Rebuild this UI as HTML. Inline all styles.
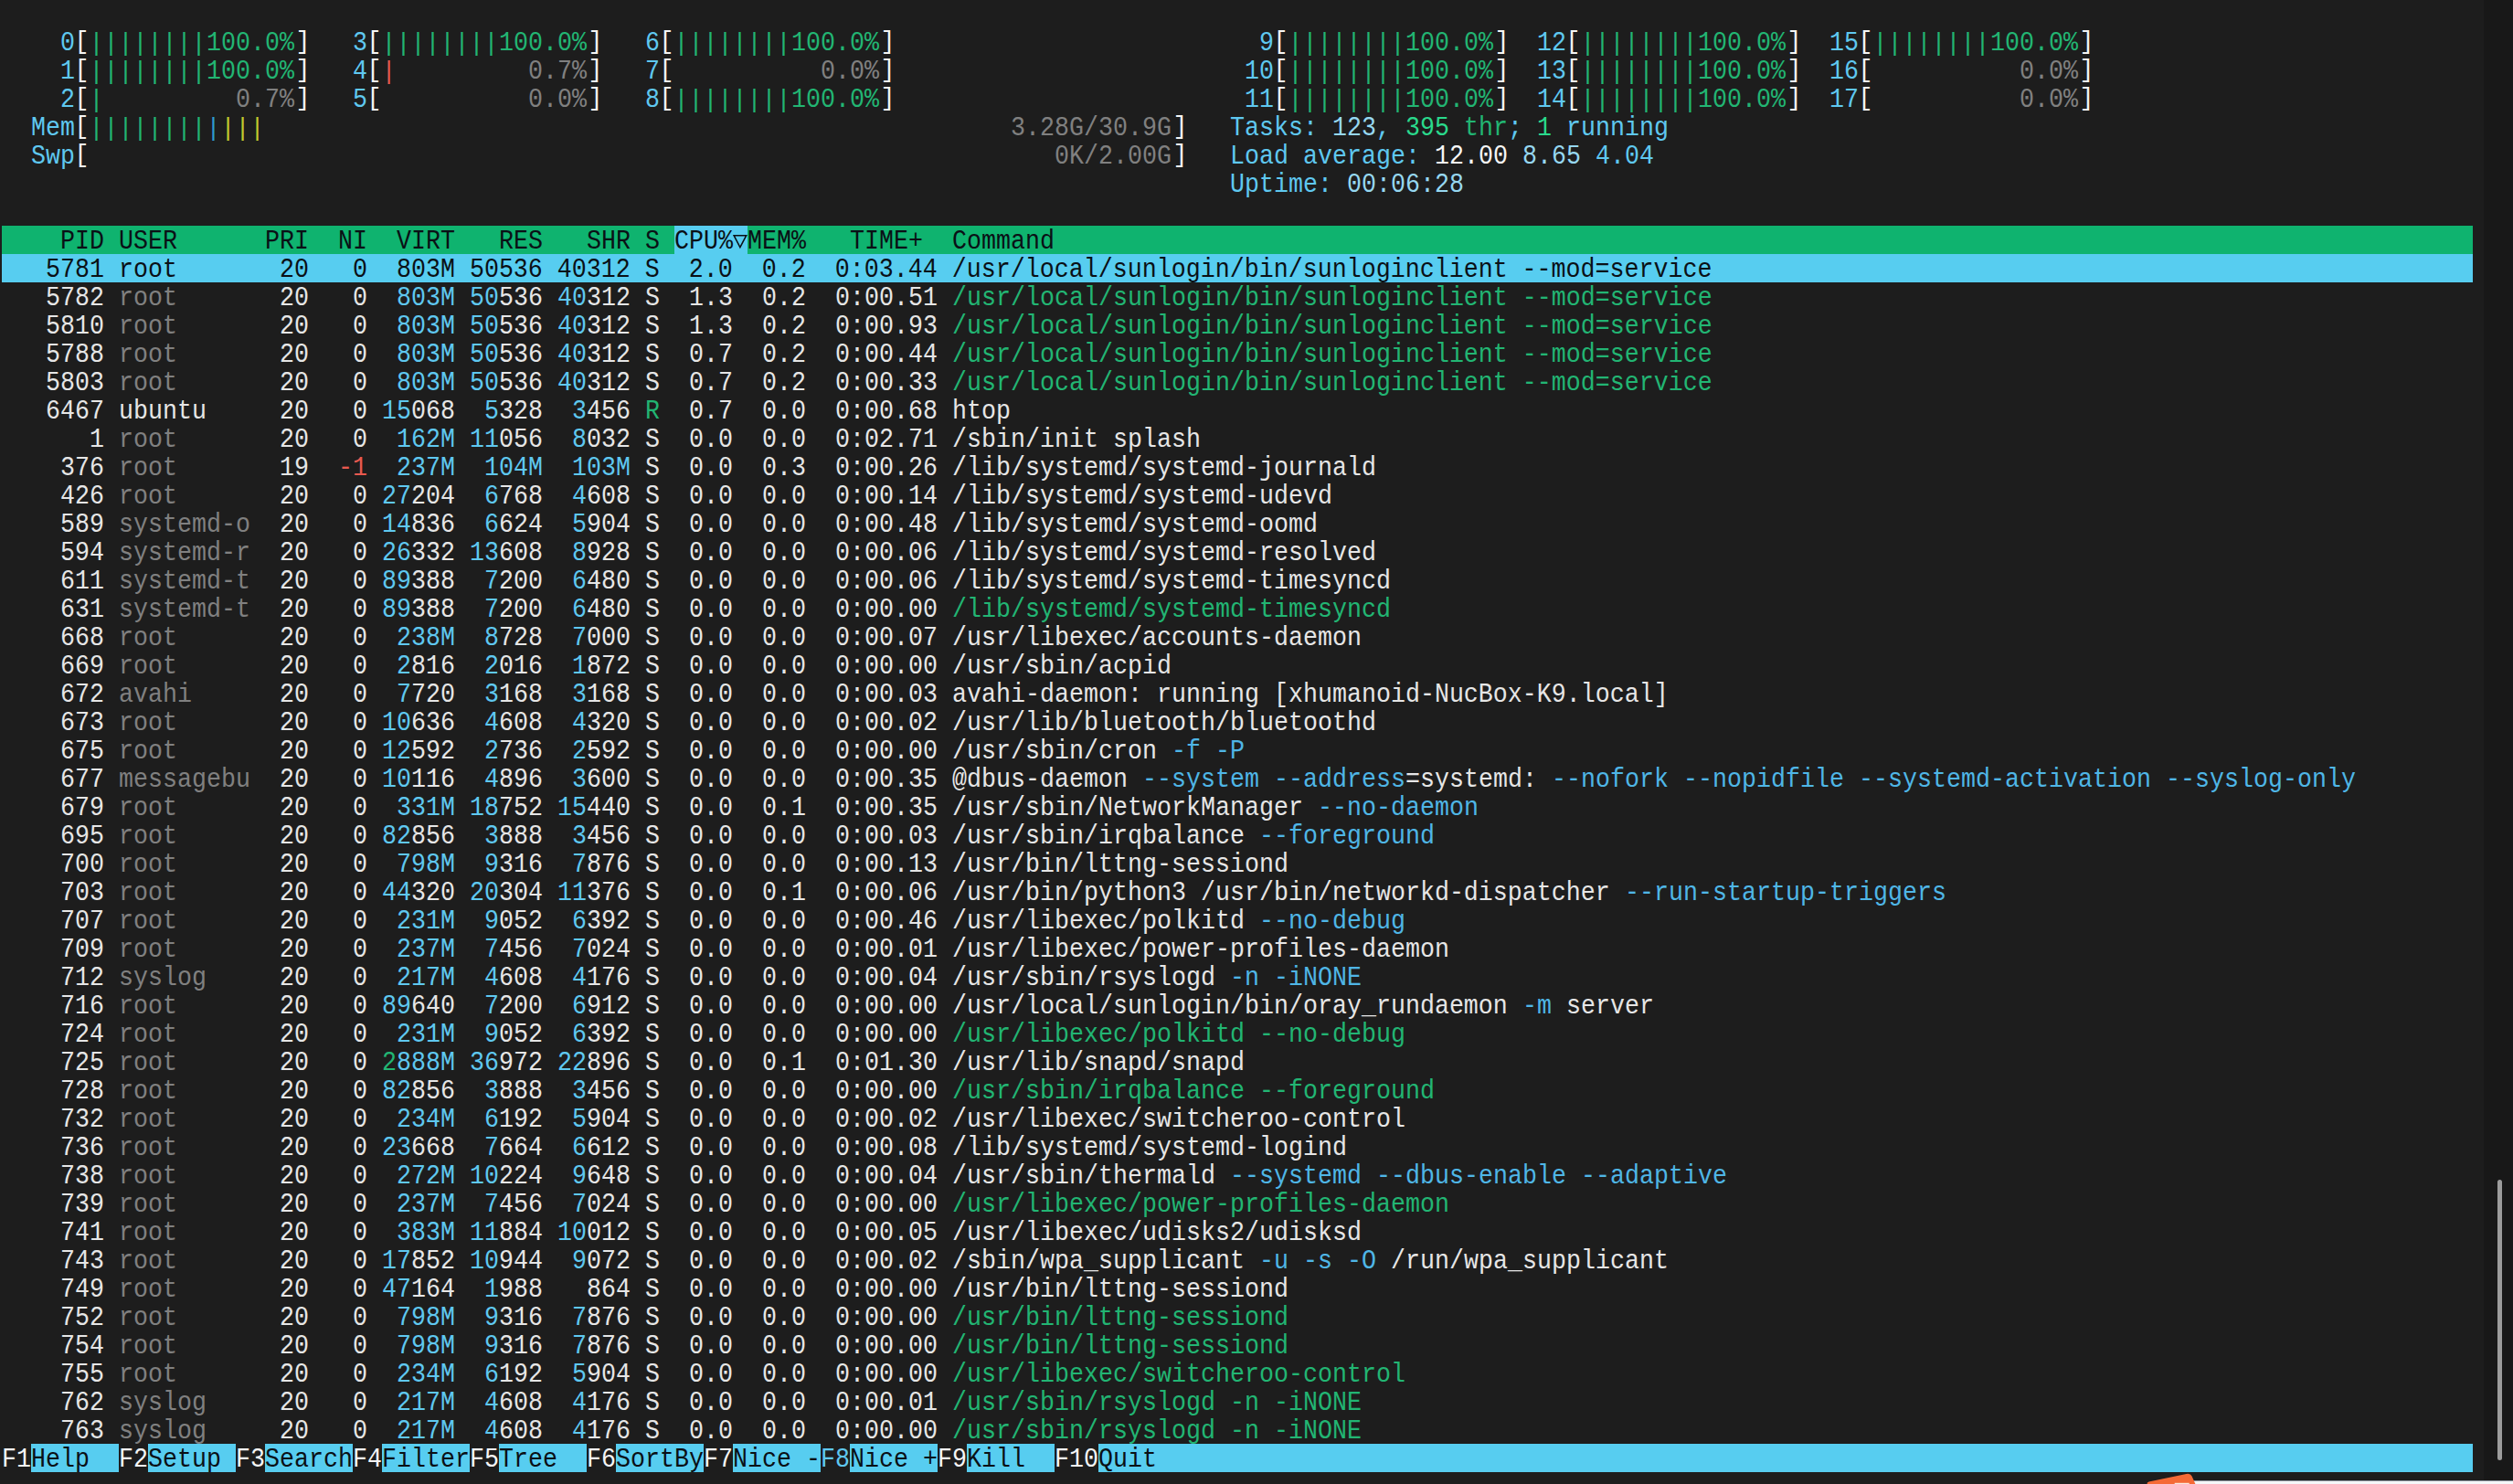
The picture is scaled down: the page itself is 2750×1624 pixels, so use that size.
<!DOCTYPE html>
<html><head><meta charset="utf-8"><title>htop</title>
<style>
html,body{margin:0;padding:0;background:#1d1d1d;}
body{width:2750px;height:1624px;overflow:hidden;position:relative;font-family:"Liberation Mono",monospace;}
#bg,#tx{position:absolute;left:0;top:0;width:2750px;height:1624px;overflow:hidden;}
#bg div{position:absolute;}
.r{position:absolute;left:0;height:31px;line-height:31px;width:2750px;font-size:26.6623px;white-space:pre;font-kerning:none;font-variant-ligatures:none;}
.r span{position:absolute;top:0;height:31px;transform:scaleY(1.09);transform-origin:0 22.6px;}
.r span.bl{transform:translate(-0.6px,-1.7px) scaleY(1.04);}
.r span.br{transform:translate(1.4px,-1.7px) scaleY(1.04);}
.r span.ba{transform:translate(-0.5px,0.4px) scaleY(1.03);}
.w{color:#e6e6e6}.W{color:#f5f5f5}.g{color:#808080}.c{color:#5fc8f0}.C{color:#96d7f0}.f{color:#4fb6e6}
.n{color:#22b573}.N{color:#2ad98c}.r0{color:#e8594f}.y{color:#c2ca2e}.b{color:#2f9bd0}.k{color:#0a1016}
</style></head><body>
<div id="bg">
<div style="left:2px;top:247px;width:2704px;height:31px;background:#0fb36f;"></div>
<div style="left:738px;top:247px;width:80px;height:31px;background:#57cdf0;"></div>
<div style="left:2px;top:278px;width:2704px;height:31px;background:#57cdf0;"></div>
<div style="left:34px;top:1580px;width:96px;height:31px;background:#57cdf0;"></div>
<div style="left:162px;top:1580px;width:96px;height:31px;background:#57cdf0;"></div>
<div style="left:290px;top:1580px;width:96px;height:31px;background:#57cdf0;"></div>
<div style="left:418px;top:1580px;width:96px;height:31px;background:#57cdf0;"></div>
<div style="left:546px;top:1580px;width:96px;height:31px;background:#57cdf0;"></div>
<div style="left:674px;top:1580px;width:96px;height:31px;background:#57cdf0;"></div>
<div style="left:802px;top:1580px;width:96px;height:31px;background:#57cdf0;"></div>
<div style="left:930px;top:1580px;width:96px;height:31px;background:#57cdf0;"></div>
<div style="left:1058px;top:1580px;width:96px;height:31px;background:#57cdf0;"></div>
<div style="left:1202px;top:1580px;width:1504px;height:31px;background:#57cdf0;"></div>
<div style="left:2718px;top:0px;width:32px;height:1620px;background:#181818;"></div>
<div style="left:2733px;top:1291px;width:5px;height:307px;background:#9c9c9c;border-radius:2.5px;"></div>
<div style="left:2400px;top:1621px;width:350px;height:3px;background:#f5f7f9;"></div>
<div style="left:2400px;top:1620px;width:350px;height:1px;background:#868e98;"></div>
<svg style="position:absolute;left:2340px;top:1608px" width="70" height="16" viewBox="0 0 70 16"><path d="M9.6 16 Q9.2 14.2 11.5 13.6 L52.5 5.0 Q57 4.0 58.6 7.6 L62.4 16 Z" fill="#f56a36"/><rect x="39.7" y="14.8" width="16" height="1.2" fill="#fbe9dc"/></svg>
</div>
<div id="tx">
<div class="r" style="top:33.35px"><span class="c" style="left:34px">  0</span><span class="W bl" style="left:82px">[</span><span class="n ba" style="left:98px">||||||||</span><span class="n" style="left:226px">100.0%</span><span class="W br" style="left:322px">]</span><span class="c" style="left:354px">  3</span><span class="W bl" style="left:402px">[</span><span class="n ba" style="left:418px">||||||||</span><span class="n" style="left:546px">100.0%</span><span class="W br" style="left:642px">]</span><span class="c" style="left:674px">  6</span><span class="W bl" style="left:722px">[</span><span class="n ba" style="left:738px">||||||||</span><span class="n" style="left:866px">100.0%</span><span class="W br" style="left:962px">]</span><span class="c" style="left:1346px">  9</span><span class="W bl" style="left:1394px">[</span><span class="n ba" style="left:1410px">||||||||</span><span class="n" style="left:1538px">100.0%</span><span class="W br" style="left:1634px">]</span><span class="c" style="left:1666px"> 12</span><span class="W bl" style="left:1714px">[</span><span class="n ba" style="left:1730px">||||||||</span><span class="n" style="left:1858px">100.0%</span><span class="W br" style="left:1954px">]</span><span class="c" style="left:1986px"> 15</span><span class="W bl" style="left:2034px">[</span><span class="n ba" style="left:2050px">||||||||</span><span class="n" style="left:2178px">100.0%</span><span class="W br" style="left:2274px">]</span></div>
<div class="r" style="top:64.35px"><span class="c" style="left:34px">  1</span><span class="W bl" style="left:82px">[</span><span class="n ba" style="left:98px">||||||||</span><span class="n" style="left:226px">100.0%</span><span class="W br" style="left:322px">]</span><span class="c" style="left:354px">  4</span><span class="W bl" style="left:402px">[</span><span class="r0 ba" style="left:418px">|</span><span class="g" style="left:578px">0.7%</span><span class="W br" style="left:642px">]</span><span class="c" style="left:674px">  7</span><span class="W bl" style="left:722px">[</span><span class="g" style="left:898px">0.0%</span><span class="W br" style="left:962px">]</span><span class="c" style="left:1346px"> 10</span><span class="W bl" style="left:1394px">[</span><span class="n ba" style="left:1410px">||||||||</span><span class="n" style="left:1538px">100.0%</span><span class="W br" style="left:1634px">]</span><span class="c" style="left:1666px"> 13</span><span class="W bl" style="left:1714px">[</span><span class="n ba" style="left:1730px">||||||||</span><span class="n" style="left:1858px">100.0%</span><span class="W br" style="left:1954px">]</span><span class="c" style="left:1986px"> 16</span><span class="W bl" style="left:2034px">[</span><span class="g" style="left:2210px">0.0%</span><span class="W br" style="left:2274px">]</span></div>
<div class="r" style="top:95.35px"><span class="c" style="left:34px">  2</span><span class="W bl" style="left:82px">[</span><span class="n ba" style="left:98px">|</span><span class="g" style="left:258px">0.7%</span><span class="W br" style="left:322px">]</span><span class="c" style="left:354px">  5</span><span class="W bl" style="left:402px">[</span><span class="g" style="left:578px">0.0%</span><span class="W br" style="left:642px">]</span><span class="c" style="left:674px">  8</span><span class="W bl" style="left:722px">[</span><span class="n ba" style="left:738px">||||||||</span><span class="n" style="left:866px">100.0%</span><span class="W br" style="left:962px">]</span><span class="c" style="left:1346px"> 11</span><span class="W bl" style="left:1394px">[</span><span class="n ba" style="left:1410px">||||||||</span><span class="n" style="left:1538px">100.0%</span><span class="W br" style="left:1634px">]</span><span class="c" style="left:1666px"> 14</span><span class="W bl" style="left:1714px">[</span><span class="n ba" style="left:1730px">||||||||</span><span class="n" style="left:1858px">100.0%</span><span class="W br" style="left:1954px">]</span><span class="c" style="left:1986px"> 17</span><span class="W bl" style="left:2034px">[</span><span class="g" style="left:2210px">0.0%</span><span class="W br" style="left:2274px">]</span></div>
<div class="r" style="top:126.35px"><span class="c" style="left:34px">Mem</span><span class="W bl" style="left:82px">[</span><span class="n ba" style="left:98px">||||||||</span><span class="b ba" style="left:226px">|</span><span class="y ba" style="left:242px">|||</span><span class="g" style="left:1106px">3.28G/30.9G</span><span class="W br" style="left:1282px">]</span><span class="c" style="left:1346px">Tasks: </span><span class="C" style="left:1458px">123</span><span class="c" style="left:1506px">, </span><span class="N" style="left:1538px">395</span><span class="n" style="left:1586px"> thr</span><span class="c" style="left:1650px">; </span><span class="N" style="left:1682px">1</span><span class="c" style="left:1698px"> running</span></div>
<div class="r" style="top:157.35px"><span class="c" style="left:34px">Swp</span><span class="W bl" style="left:82px">[</span><span class="g" style="left:1154px">0K/2.00G</span><span class="W br" style="left:1282px">]</span><span class="c" style="left:1346px">Load average: </span><span class="W" style="left:1570px">12.00 </span><span class="C" style="left:1666px">8.65 </span><span class="c" style="left:1746px">4.04</span></div>
<div class="r" style="top:188.35px"><span class="c" style="left:1346px">Uptime: </span><span class="C" style="left:1474px">00:06:28</span></div>
<div class="r" style="top:250.35px"><span class="k" style="left:66px">PID</span><span class="k" style="left:130px">USER</span><span class="k" style="left:290px">PRI</span><span class="k" style="left:370px">NI</span><span class="k" style="left:434px">VIRT</span><span class="k" style="left:546px">RES</span><span class="k" style="left:642px">SHR</span><span class="k" style="left:706px">S</span><span class="k" style="left:738px">CPU%</span><span class="k" style="left:818px">MEM%</span><span class="k" style="left:930px">TIME+</span><span class="k" style="left:1042px">Command</span></div>
<div class="r" style="top:281.35px"><span class="k" style="left:2px">   5781 root       20   0  803M 50536 40312 S  2.0  0.2  0:03.44 /usr/local/sunlogin/bin/sunloginclient --mod=service</span></div>
<div class="r" style="top:312.35px"><span class="w" style="left:2px">   5782</span><span class="g" style="left:130px">root</span><span class="w" style="left:290px"> 20</span><span class="w" style="left:354px">  0</span><span class="c" style="left:434px">803M</span><span class="c" style="left:514px">50</span><span class="w" style="left:546px">536</span><span class="c" style="left:610px">40</span><span class="w" style="left:642px">312</span><span class="w" style="left:706px">S</span><span class="w" style="left:738px"> 1.3</span><span class="w" style="left:818px"> 0.2</span><span class="w" style="left:898px"> 0:00.51</span><span class="n" style="left:1042px">/usr/local/sunlogin/bin/sunloginclient --mod=service</span></div>
<div class="r" style="top:343.35px"><span class="w" style="left:2px">   5810</span><span class="g" style="left:130px">root</span><span class="w" style="left:290px"> 20</span><span class="w" style="left:354px">  0</span><span class="c" style="left:434px">803M</span><span class="c" style="left:514px">50</span><span class="w" style="left:546px">536</span><span class="c" style="left:610px">40</span><span class="w" style="left:642px">312</span><span class="w" style="left:706px">S</span><span class="w" style="left:738px"> 1.3</span><span class="w" style="left:818px"> 0.2</span><span class="w" style="left:898px"> 0:00.93</span><span class="n" style="left:1042px">/usr/local/sunlogin/bin/sunloginclient --mod=service</span></div>
<div class="r" style="top:374.35px"><span class="w" style="left:2px">   5788</span><span class="g" style="left:130px">root</span><span class="w" style="left:290px"> 20</span><span class="w" style="left:354px">  0</span><span class="c" style="left:434px">803M</span><span class="c" style="left:514px">50</span><span class="w" style="left:546px">536</span><span class="c" style="left:610px">40</span><span class="w" style="left:642px">312</span><span class="w" style="left:706px">S</span><span class="w" style="left:738px"> 0.7</span><span class="w" style="left:818px"> 0.2</span><span class="w" style="left:898px"> 0:00.44</span><span class="n" style="left:1042px">/usr/local/sunlogin/bin/sunloginclient --mod=service</span></div>
<div class="r" style="top:405.35px"><span class="w" style="left:2px">   5803</span><span class="g" style="left:130px">root</span><span class="w" style="left:290px"> 20</span><span class="w" style="left:354px">  0</span><span class="c" style="left:434px">803M</span><span class="c" style="left:514px">50</span><span class="w" style="left:546px">536</span><span class="c" style="left:610px">40</span><span class="w" style="left:642px">312</span><span class="w" style="left:706px">S</span><span class="w" style="left:738px"> 0.7</span><span class="w" style="left:818px"> 0.2</span><span class="w" style="left:898px"> 0:00.33</span><span class="n" style="left:1042px">/usr/local/sunlogin/bin/sunloginclient --mod=service</span></div>
<div class="r" style="top:436.35px"><span class="w" style="left:2px">   6467</span><span class="w" style="left:130px">ubuntu</span><span class="w" style="left:290px"> 20</span><span class="w" style="left:354px">  0</span><span class="c" style="left:418px">15</span><span class="w" style="left:450px">068</span><span class="c" style="left:530px">5</span><span class="w" style="left:546px">328</span><span class="c" style="left:626px">3</span><span class="w" style="left:642px">456</span><span class="n" style="left:706px">R</span><span class="w" style="left:738px"> 0.7</span><span class="w" style="left:818px"> 0.0</span><span class="w" style="left:898px"> 0:00.68</span><span class="w" style="left:1042px">htop</span></div>
<div class="r" style="top:467.35px"><span class="w" style="left:2px">      1</span><span class="g" style="left:130px">root</span><span class="w" style="left:290px"> 20</span><span class="w" style="left:354px">  0</span><span class="c" style="left:434px">162M</span><span class="c" style="left:514px">11</span><span class="w" style="left:546px">056</span><span class="c" style="left:626px">8</span><span class="w" style="left:642px">032</span><span class="w" style="left:706px">S</span><span class="w" style="left:738px"> 0.0</span><span class="w" style="left:818px"> 0.0</span><span class="w" style="left:898px"> 0:02.71</span><span class="w" style="left:1042px">/sbin/init splash</span></div>
<div class="r" style="top:498.35px"><span class="w" style="left:2px">    376</span><span class="g" style="left:130px">root</span><span class="w" style="left:290px"> 19</span><span class="r0" style="left:354px"> -1</span><span class="c" style="left:434px">237M</span><span class="c" style="left:530px">104M</span><span class="c" style="left:626px">103M</span><span class="w" style="left:706px">S</span><span class="w" style="left:738px"> 0.0</span><span class="w" style="left:818px"> 0.3</span><span class="w" style="left:898px"> 0:00.26</span><span class="w" style="left:1042px">/lib/systemd/systemd-journald</span></div>
<div class="r" style="top:529.35px"><span class="w" style="left:2px">    426</span><span class="g" style="left:130px">root</span><span class="w" style="left:290px"> 20</span><span class="w" style="left:354px">  0</span><span class="c" style="left:418px">27</span><span class="w" style="left:450px">204</span><span class="c" style="left:530px">6</span><span class="w" style="left:546px">768</span><span class="c" style="left:626px">4</span><span class="w" style="left:642px">608</span><span class="w" style="left:706px">S</span><span class="w" style="left:738px"> 0.0</span><span class="w" style="left:818px"> 0.0</span><span class="w" style="left:898px"> 0:00.14</span><span class="w" style="left:1042px">/lib/systemd/systemd-udevd</span></div>
<div class="r" style="top:560.35px"><span class="w" style="left:2px">    589</span><span class="g" style="left:130px">systemd-o</span><span class="w" style="left:290px"> 20</span><span class="w" style="left:354px">  0</span><span class="c" style="left:418px">14</span><span class="w" style="left:450px">836</span><span class="c" style="left:530px">6</span><span class="w" style="left:546px">624</span><span class="c" style="left:626px">5</span><span class="w" style="left:642px">904</span><span class="w" style="left:706px">S</span><span class="w" style="left:738px"> 0.0</span><span class="w" style="left:818px"> 0.0</span><span class="w" style="left:898px"> 0:00.48</span><span class="w" style="left:1042px">/lib/systemd/systemd-oomd</span></div>
<div class="r" style="top:591.35px"><span class="w" style="left:2px">    594</span><span class="g" style="left:130px">systemd-r</span><span class="w" style="left:290px"> 20</span><span class="w" style="left:354px">  0</span><span class="c" style="left:418px">26</span><span class="w" style="left:450px">332</span><span class="c" style="left:514px">13</span><span class="w" style="left:546px">608</span><span class="c" style="left:626px">8</span><span class="w" style="left:642px">928</span><span class="w" style="left:706px">S</span><span class="w" style="left:738px"> 0.0</span><span class="w" style="left:818px"> 0.0</span><span class="w" style="left:898px"> 0:00.06</span><span class="w" style="left:1042px">/lib/systemd/systemd-resolved</span></div>
<div class="r" style="top:622.35px"><span class="w" style="left:2px">    611</span><span class="g" style="left:130px">systemd-t</span><span class="w" style="left:290px"> 20</span><span class="w" style="left:354px">  0</span><span class="c" style="left:418px">89</span><span class="w" style="left:450px">388</span><span class="c" style="left:530px">7</span><span class="w" style="left:546px">200</span><span class="c" style="left:626px">6</span><span class="w" style="left:642px">480</span><span class="w" style="left:706px">S</span><span class="w" style="left:738px"> 0.0</span><span class="w" style="left:818px"> 0.0</span><span class="w" style="left:898px"> 0:00.06</span><span class="w" style="left:1042px">/lib/systemd/systemd-timesyncd</span></div>
<div class="r" style="top:653.35px"><span class="w" style="left:2px">    631</span><span class="g" style="left:130px">systemd-t</span><span class="w" style="left:290px"> 20</span><span class="w" style="left:354px">  0</span><span class="c" style="left:418px">89</span><span class="w" style="left:450px">388</span><span class="c" style="left:530px">7</span><span class="w" style="left:546px">200</span><span class="c" style="left:626px">6</span><span class="w" style="left:642px">480</span><span class="w" style="left:706px">S</span><span class="w" style="left:738px"> 0.0</span><span class="w" style="left:818px"> 0.0</span><span class="w" style="left:898px"> 0:00.00</span><span class="n" style="left:1042px">/lib/systemd/systemd-timesyncd</span></div>
<div class="r" style="top:684.35px"><span class="w" style="left:2px">    668</span><span class="g" style="left:130px">root</span><span class="w" style="left:290px"> 20</span><span class="w" style="left:354px">  0</span><span class="c" style="left:434px">238M</span><span class="c" style="left:530px">8</span><span class="w" style="left:546px">728</span><span class="c" style="left:626px">7</span><span class="w" style="left:642px">000</span><span class="w" style="left:706px">S</span><span class="w" style="left:738px"> 0.0</span><span class="w" style="left:818px"> 0.0</span><span class="w" style="left:898px"> 0:00.07</span><span class="w" style="left:1042px">/usr/libexec/accounts-daemon</span></div>
<div class="r" style="top:715.35px"><span class="w" style="left:2px">    669</span><span class="g" style="left:130px">root</span><span class="w" style="left:290px"> 20</span><span class="w" style="left:354px">  0</span><span class="c" style="left:434px">2</span><span class="w" style="left:450px">816</span><span class="c" style="left:530px">2</span><span class="w" style="left:546px">016</span><span class="c" style="left:626px">1</span><span class="w" style="left:642px">872</span><span class="w" style="left:706px">S</span><span class="w" style="left:738px"> 0.0</span><span class="w" style="left:818px"> 0.0</span><span class="w" style="left:898px"> 0:00.00</span><span class="w" style="left:1042px">/usr/sbin/acpid</span></div>
<div class="r" style="top:746.35px"><span class="w" style="left:2px">    672</span><span class="g" style="left:130px">avahi</span><span class="w" style="left:290px"> 20</span><span class="w" style="left:354px">  0</span><span class="c" style="left:434px">7</span><span class="w" style="left:450px">720</span><span class="c" style="left:530px">3</span><span class="w" style="left:546px">168</span><span class="c" style="left:626px">3</span><span class="w" style="left:642px">168</span><span class="w" style="left:706px">S</span><span class="w" style="left:738px"> 0.0</span><span class="w" style="left:818px"> 0.0</span><span class="w" style="left:898px"> 0:00.03</span><span class="w" style="left:1042px">avahi-daemon: running [xhumanoid-NucBox-K9.local]</span></div>
<div class="r" style="top:777.35px"><span class="w" style="left:2px">    673</span><span class="g" style="left:130px">root</span><span class="w" style="left:290px"> 20</span><span class="w" style="left:354px">  0</span><span class="c" style="left:418px">10</span><span class="w" style="left:450px">636</span><span class="c" style="left:530px">4</span><span class="w" style="left:546px">608</span><span class="c" style="left:626px">4</span><span class="w" style="left:642px">320</span><span class="w" style="left:706px">S</span><span class="w" style="left:738px"> 0.0</span><span class="w" style="left:818px"> 0.0</span><span class="w" style="left:898px"> 0:00.02</span><span class="w" style="left:1042px">/usr/lib/bluetooth/bluetoothd</span></div>
<div class="r" style="top:808.35px"><span class="w" style="left:2px">    675</span><span class="g" style="left:130px">root</span><span class="w" style="left:290px"> 20</span><span class="w" style="left:354px">  0</span><span class="c" style="left:418px">12</span><span class="w" style="left:450px">592</span><span class="c" style="left:530px">2</span><span class="w" style="left:546px">736</span><span class="c" style="left:626px">2</span><span class="w" style="left:642px">592</span><span class="w" style="left:706px">S</span><span class="w" style="left:738px"> 0.0</span><span class="w" style="left:818px"> 0.0</span><span class="w" style="left:898px"> 0:00.00</span><span class="w" style="left:1042px">/usr/sbin/cron </span><span class="f" style="left:1282px">-f</span><span class="w" style="left:1314px"> </span><span class="f" style="left:1330px">-P</span></div>
<div class="r" style="top:839.35px"><span class="w" style="left:2px">    677</span><span class="g" style="left:130px">messagebu</span><span class="w" style="left:290px"> 20</span><span class="w" style="left:354px">  0</span><span class="c" style="left:418px">10</span><span class="w" style="left:450px">116</span><span class="c" style="left:530px">4</span><span class="w" style="left:546px">896</span><span class="c" style="left:626px">3</span><span class="w" style="left:642px">600</span><span class="w" style="left:706px">S</span><span class="w" style="left:738px"> 0.0</span><span class="w" style="left:818px"> 0.0</span><span class="w" style="left:898px"> 0:00.35</span><span class="w" style="left:1042px">@dbus-daemon </span><span class="f" style="left:1250px">--system</span><span class="w" style="left:1378px"> </span><span class="f" style="left:1394px">--address</span><span class="w" style="left:1538px">=systemd: </span><span class="f" style="left:1698px">--nofork</span><span class="w" style="left:1826px"> </span><span class="f" style="left:1842px">--nopidfile</span><span class="w" style="left:2018px"> </span><span class="f" style="left:2034px">--systemd-activation</span><span class="w" style="left:2354px"> </span><span class="f" style="left:2370px">--syslog-only</span></div>
<div class="r" style="top:870.35px"><span class="w" style="left:2px">    679</span><span class="g" style="left:130px">root</span><span class="w" style="left:290px"> 20</span><span class="w" style="left:354px">  0</span><span class="c" style="left:434px">331M</span><span class="c" style="left:514px">18</span><span class="w" style="left:546px">752</span><span class="c" style="left:610px">15</span><span class="w" style="left:642px">440</span><span class="w" style="left:706px">S</span><span class="w" style="left:738px"> 0.0</span><span class="w" style="left:818px"> 0.1</span><span class="w" style="left:898px"> 0:00.35</span><span class="w" style="left:1042px">/usr/sbin/NetworkManager </span><span class="f" style="left:1442px">--no-daemon</span></div>
<div class="r" style="top:901.35px"><span class="w" style="left:2px">    695</span><span class="g" style="left:130px">root</span><span class="w" style="left:290px"> 20</span><span class="w" style="left:354px">  0</span><span class="c" style="left:418px">82</span><span class="w" style="left:450px">856</span><span class="c" style="left:530px">3</span><span class="w" style="left:546px">888</span><span class="c" style="left:626px">3</span><span class="w" style="left:642px">456</span><span class="w" style="left:706px">S</span><span class="w" style="left:738px"> 0.0</span><span class="w" style="left:818px"> 0.0</span><span class="w" style="left:898px"> 0:00.03</span><span class="w" style="left:1042px">/usr/sbin/irqbalance </span><span class="f" style="left:1378px">--foreground</span></div>
<div class="r" style="top:932.35px"><span class="w" style="left:2px">    700</span><span class="g" style="left:130px">root</span><span class="w" style="left:290px"> 20</span><span class="w" style="left:354px">  0</span><span class="c" style="left:434px">798M</span><span class="c" style="left:530px">9</span><span class="w" style="left:546px">316</span><span class="c" style="left:626px">7</span><span class="w" style="left:642px">876</span><span class="w" style="left:706px">S</span><span class="w" style="left:738px"> 0.0</span><span class="w" style="left:818px"> 0.0</span><span class="w" style="left:898px"> 0:00.13</span><span class="w" style="left:1042px">/usr/bin/lttng-sessiond</span></div>
<div class="r" style="top:963.35px"><span class="w" style="left:2px">    703</span><span class="g" style="left:130px">root</span><span class="w" style="left:290px"> 20</span><span class="w" style="left:354px">  0</span><span class="c" style="left:418px">44</span><span class="w" style="left:450px">320</span><span class="c" style="left:514px">20</span><span class="w" style="left:546px">304</span><span class="c" style="left:610px">11</span><span class="w" style="left:642px">376</span><span class="w" style="left:706px">S</span><span class="w" style="left:738px"> 0.0</span><span class="w" style="left:818px"> 0.1</span><span class="w" style="left:898px"> 0:00.06</span><span class="w" style="left:1042px">/usr/bin/python3 /usr/bin/networkd-dispatcher </span><span class="f" style="left:1778px">--run-startup-triggers</span></div>
<div class="r" style="top:994.35px"><span class="w" style="left:2px">    707</span><span class="g" style="left:130px">root</span><span class="w" style="left:290px"> 20</span><span class="w" style="left:354px">  0</span><span class="c" style="left:434px">231M</span><span class="c" style="left:530px">9</span><span class="w" style="left:546px">052</span><span class="c" style="left:626px">6</span><span class="w" style="left:642px">392</span><span class="w" style="left:706px">S</span><span class="w" style="left:738px"> 0.0</span><span class="w" style="left:818px"> 0.0</span><span class="w" style="left:898px"> 0:00.46</span><span class="w" style="left:1042px">/usr/libexec/polkitd </span><span class="f" style="left:1378px">--no-debug</span></div>
<div class="r" style="top:1025.35px"><span class="w" style="left:2px">    709</span><span class="g" style="left:130px">root</span><span class="w" style="left:290px"> 20</span><span class="w" style="left:354px">  0</span><span class="c" style="left:434px">237M</span><span class="c" style="left:530px">7</span><span class="w" style="left:546px">456</span><span class="c" style="left:626px">7</span><span class="w" style="left:642px">024</span><span class="w" style="left:706px">S</span><span class="w" style="left:738px"> 0.0</span><span class="w" style="left:818px"> 0.0</span><span class="w" style="left:898px"> 0:00.01</span><span class="w" style="left:1042px">/usr/libexec/power-profiles-daemon</span></div>
<div class="r" style="top:1056.35px"><span class="w" style="left:2px">    712</span><span class="g" style="left:130px">syslog</span><span class="w" style="left:290px"> 20</span><span class="w" style="left:354px">  0</span><span class="c" style="left:434px">217M</span><span class="c" style="left:530px">4</span><span class="w" style="left:546px">608</span><span class="c" style="left:626px">4</span><span class="w" style="left:642px">176</span><span class="w" style="left:706px">S</span><span class="w" style="left:738px"> 0.0</span><span class="w" style="left:818px"> 0.0</span><span class="w" style="left:898px"> 0:00.04</span><span class="w" style="left:1042px">/usr/sbin/rsyslogd </span><span class="f" style="left:1346px">-n</span><span class="w" style="left:1378px"> </span><span class="f" style="left:1394px">-iNONE</span></div>
<div class="r" style="top:1087.35px"><span class="w" style="left:2px">    716</span><span class="g" style="left:130px">root</span><span class="w" style="left:290px"> 20</span><span class="w" style="left:354px">  0</span><span class="c" style="left:418px">89</span><span class="w" style="left:450px">640</span><span class="c" style="left:530px">7</span><span class="w" style="left:546px">200</span><span class="c" style="left:626px">6</span><span class="w" style="left:642px">912</span><span class="w" style="left:706px">S</span><span class="w" style="left:738px"> 0.0</span><span class="w" style="left:818px"> 0.0</span><span class="w" style="left:898px"> 0:00.00</span><span class="w" style="left:1042px">/usr/local/sunlogin/bin/oray_rundaemon </span><span class="f" style="left:1666px">-m</span><span class="w" style="left:1698px"> server</span></div>
<div class="r" style="top:1118.35px"><span class="w" style="left:2px">    724</span><span class="g" style="left:130px">root</span><span class="w" style="left:290px"> 20</span><span class="w" style="left:354px">  0</span><span class="c" style="left:434px">231M</span><span class="c" style="left:530px">9</span><span class="w" style="left:546px">052</span><span class="c" style="left:626px">6</span><span class="w" style="left:642px">392</span><span class="w" style="left:706px">S</span><span class="w" style="left:738px"> 0.0</span><span class="w" style="left:818px"> 0.0</span><span class="w" style="left:898px"> 0:00.00</span><span class="n" style="left:1042px">/usr/libexec/polkitd --no-debug</span></div>
<div class="r" style="top:1149.35px"><span class="w" style="left:2px">    725</span><span class="g" style="left:130px">root</span><span class="w" style="left:290px"> 20</span><span class="w" style="left:354px">  0</span><span class="n" style="left:418px">2</span><span class="c" style="left:434px">888M</span><span class="c" style="left:514px">36</span><span class="w" style="left:546px">972</span><span class="c" style="left:610px">22</span><span class="w" style="left:642px">896</span><span class="w" style="left:706px">S</span><span class="w" style="left:738px"> 0.0</span><span class="w" style="left:818px"> 0.1</span><span class="w" style="left:898px"> 0:01.30</span><span class="w" style="left:1042px">/usr/lib/snapd/snapd</span></div>
<div class="r" style="top:1180.35px"><span class="w" style="left:2px">    728</span><span class="g" style="left:130px">root</span><span class="w" style="left:290px"> 20</span><span class="w" style="left:354px">  0</span><span class="c" style="left:418px">82</span><span class="w" style="left:450px">856</span><span class="c" style="left:530px">3</span><span class="w" style="left:546px">888</span><span class="c" style="left:626px">3</span><span class="w" style="left:642px">456</span><span class="w" style="left:706px">S</span><span class="w" style="left:738px"> 0.0</span><span class="w" style="left:818px"> 0.0</span><span class="w" style="left:898px"> 0:00.00</span><span class="n" style="left:1042px">/usr/sbin/irqbalance --foreground</span></div>
<div class="r" style="top:1211.35px"><span class="w" style="left:2px">    732</span><span class="g" style="left:130px">root</span><span class="w" style="left:290px"> 20</span><span class="w" style="left:354px">  0</span><span class="c" style="left:434px">234M</span><span class="c" style="left:530px">6</span><span class="w" style="left:546px">192</span><span class="c" style="left:626px">5</span><span class="w" style="left:642px">904</span><span class="w" style="left:706px">S</span><span class="w" style="left:738px"> 0.0</span><span class="w" style="left:818px"> 0.0</span><span class="w" style="left:898px"> 0:00.02</span><span class="w" style="left:1042px">/usr/libexec/switcheroo-control</span></div>
<div class="r" style="top:1242.35px"><span class="w" style="left:2px">    736</span><span class="g" style="left:130px">root</span><span class="w" style="left:290px"> 20</span><span class="w" style="left:354px">  0</span><span class="c" style="left:418px">23</span><span class="w" style="left:450px">668</span><span class="c" style="left:530px">7</span><span class="w" style="left:546px">664</span><span class="c" style="left:626px">6</span><span class="w" style="left:642px">612</span><span class="w" style="left:706px">S</span><span class="w" style="left:738px"> 0.0</span><span class="w" style="left:818px"> 0.0</span><span class="w" style="left:898px"> 0:00.08</span><span class="w" style="left:1042px">/lib/systemd/systemd-logind</span></div>
<div class="r" style="top:1273.35px"><span class="w" style="left:2px">    738</span><span class="g" style="left:130px">root</span><span class="w" style="left:290px"> 20</span><span class="w" style="left:354px">  0</span><span class="c" style="left:434px">272M</span><span class="c" style="left:514px">10</span><span class="w" style="left:546px">224</span><span class="c" style="left:626px">9</span><span class="w" style="left:642px">648</span><span class="w" style="left:706px">S</span><span class="w" style="left:738px"> 0.0</span><span class="w" style="left:818px"> 0.0</span><span class="w" style="left:898px"> 0:00.04</span><span class="w" style="left:1042px">/usr/sbin/thermald </span><span class="f" style="left:1346px">--systemd</span><span class="w" style="left:1490px"> </span><span class="f" style="left:1506px">--dbus-enable</span><span class="w" style="left:1714px"> </span><span class="f" style="left:1730px">--adaptive</span></div>
<div class="r" style="top:1304.35px"><span class="w" style="left:2px">    739</span><span class="g" style="left:130px">root</span><span class="w" style="left:290px"> 20</span><span class="w" style="left:354px">  0</span><span class="c" style="left:434px">237M</span><span class="c" style="left:530px">7</span><span class="w" style="left:546px">456</span><span class="c" style="left:626px">7</span><span class="w" style="left:642px">024</span><span class="w" style="left:706px">S</span><span class="w" style="left:738px"> 0.0</span><span class="w" style="left:818px"> 0.0</span><span class="w" style="left:898px"> 0:00.00</span><span class="n" style="left:1042px">/usr/libexec/power-profiles-daemon</span></div>
<div class="r" style="top:1335.35px"><span class="w" style="left:2px">    741</span><span class="g" style="left:130px">root</span><span class="w" style="left:290px"> 20</span><span class="w" style="left:354px">  0</span><span class="c" style="left:434px">383M</span><span class="c" style="left:514px">11</span><span class="w" style="left:546px">884</span><span class="c" style="left:610px">10</span><span class="w" style="left:642px">012</span><span class="w" style="left:706px">S</span><span class="w" style="left:738px"> 0.0</span><span class="w" style="left:818px"> 0.0</span><span class="w" style="left:898px"> 0:00.05</span><span class="w" style="left:1042px">/usr/libexec/udisks2/udisksd</span></div>
<div class="r" style="top:1366.35px"><span class="w" style="left:2px">    743</span><span class="g" style="left:130px">root</span><span class="w" style="left:290px"> 20</span><span class="w" style="left:354px">  0</span><span class="c" style="left:418px">17</span><span class="w" style="left:450px">852</span><span class="c" style="left:514px">10</span><span class="w" style="left:546px">944</span><span class="c" style="left:626px">9</span><span class="w" style="left:642px">072</span><span class="w" style="left:706px">S</span><span class="w" style="left:738px"> 0.0</span><span class="w" style="left:818px"> 0.0</span><span class="w" style="left:898px"> 0:00.02</span><span class="w" style="left:1042px">/sbin/wpa_supplicant </span><span class="f" style="left:1378px">-u</span><span class="w" style="left:1410px"> </span><span class="f" style="left:1426px">-s</span><span class="w" style="left:1458px"> </span><span class="f" style="left:1474px">-O</span><span class="w" style="left:1506px"> /run/wpa_supplicant</span></div>
<div class="r" style="top:1397.35px"><span class="w" style="left:2px">    749</span><span class="g" style="left:130px">root</span><span class="w" style="left:290px"> 20</span><span class="w" style="left:354px">  0</span><span class="c" style="left:418px">47</span><span class="w" style="left:450px">164</span><span class="c" style="left:530px">1</span><span class="w" style="left:546px">988</span><span class="w" style="left:642px">864</span><span class="w" style="left:706px">S</span><span class="w" style="left:738px"> 0.0</span><span class="w" style="left:818px"> 0.0</span><span class="w" style="left:898px"> 0:00.00</span><span class="w" style="left:1042px">/usr/bin/lttng-sessiond</span></div>
<div class="r" style="top:1428.35px"><span class="w" style="left:2px">    752</span><span class="g" style="left:130px">root</span><span class="w" style="left:290px"> 20</span><span class="w" style="left:354px">  0</span><span class="c" style="left:434px">798M</span><span class="c" style="left:530px">9</span><span class="w" style="left:546px">316</span><span class="c" style="left:626px">7</span><span class="w" style="left:642px">876</span><span class="w" style="left:706px">S</span><span class="w" style="left:738px"> 0.0</span><span class="w" style="left:818px"> 0.0</span><span class="w" style="left:898px"> 0:00.00</span><span class="n" style="left:1042px">/usr/bin/lttng-sessiond</span></div>
<div class="r" style="top:1459.35px"><span class="w" style="left:2px">    754</span><span class="g" style="left:130px">root</span><span class="w" style="left:290px"> 20</span><span class="w" style="left:354px">  0</span><span class="c" style="left:434px">798M</span><span class="c" style="left:530px">9</span><span class="w" style="left:546px">316</span><span class="c" style="left:626px">7</span><span class="w" style="left:642px">876</span><span class="w" style="left:706px">S</span><span class="w" style="left:738px"> 0.0</span><span class="w" style="left:818px"> 0.0</span><span class="w" style="left:898px"> 0:00.00</span><span class="n" style="left:1042px">/usr/bin/lttng-sessiond</span></div>
<div class="r" style="top:1490.35px"><span class="w" style="left:2px">    755</span><span class="g" style="left:130px">root</span><span class="w" style="left:290px"> 20</span><span class="w" style="left:354px">  0</span><span class="c" style="left:434px">234M</span><span class="c" style="left:530px">6</span><span class="w" style="left:546px">192</span><span class="c" style="left:626px">5</span><span class="w" style="left:642px">904</span><span class="w" style="left:706px">S</span><span class="w" style="left:738px"> 0.0</span><span class="w" style="left:818px"> 0.0</span><span class="w" style="left:898px"> 0:00.00</span><span class="n" style="left:1042px">/usr/libexec/switcheroo-control</span></div>
<div class="r" style="top:1521.35px"><span class="w" style="left:2px">    762</span><span class="g" style="left:130px">syslog</span><span class="w" style="left:290px"> 20</span><span class="w" style="left:354px">  0</span><span class="c" style="left:434px">217M</span><span class="c" style="left:530px">4</span><span class="w" style="left:546px">608</span><span class="c" style="left:626px">4</span><span class="w" style="left:642px">176</span><span class="w" style="left:706px">S</span><span class="w" style="left:738px"> 0.0</span><span class="w" style="left:818px"> 0.0</span><span class="w" style="left:898px"> 0:00.01</span><span class="n" style="left:1042px">/usr/sbin/rsyslogd -n -iNONE</span></div>
<div class="r" style="top:1552.35px"><span class="w" style="left:2px">    763</span><span class="g" style="left:130px">syslog</span><span class="w" style="left:290px"> 20</span><span class="w" style="left:354px">  0</span><span class="c" style="left:434px">217M</span><span class="c" style="left:530px">4</span><span class="w" style="left:546px">608</span><span class="c" style="left:626px">4</span><span class="w" style="left:642px">176</span><span class="w" style="left:706px">S</span><span class="w" style="left:738px"> 0.0</span><span class="w" style="left:818px"> 0.0</span><span class="w" style="left:898px"> 0:00.00</span><span class="n" style="left:1042px">/usr/sbin/rsyslogd -n -iNONE</span></div>
<div class="r" style="top:1583.35px"><span class="W" style="left:2px">F1</span><span class="k" style="left:34px">Help  </span><span class="W" style="left:130px">F2</span><span class="k" style="left:162px">Setup </span><span class="W" style="left:258px">F3</span><span class="k" style="left:290px">Search</span><span class="W" style="left:386px">F4</span><span class="k" style="left:418px">Filter</span><span class="W" style="left:514px">F5</span><span class="k" style="left:546px">Tree  </span><span class="W" style="left:642px">F6</span><span class="k" style="left:674px">SortBy</span><span class="W" style="left:770px">F7</span><span class="k" style="left:802px">Nice -</span><span class="c" style="left:898px">F8</span><span class="k" style="left:930px">Nice +</span><span class="W" style="left:1026px">F9</span><span class="k" style="left:1058px">Kill  </span><span class="W" style="left:1154px">F10</span><span class="k" style="left:1202px">Quit</span></div>
</div>
<svg style="position:absolute;left:802px;top:247px" width="16" height="31" viewBox="0 0 16 31"><path d="M1.1 10.7 H14.7 L7.9 23.7 Z" fill="none" stroke="#0a1016" stroke-width="1.5" stroke-linejoin="miter"/></svg>
</body></html>
